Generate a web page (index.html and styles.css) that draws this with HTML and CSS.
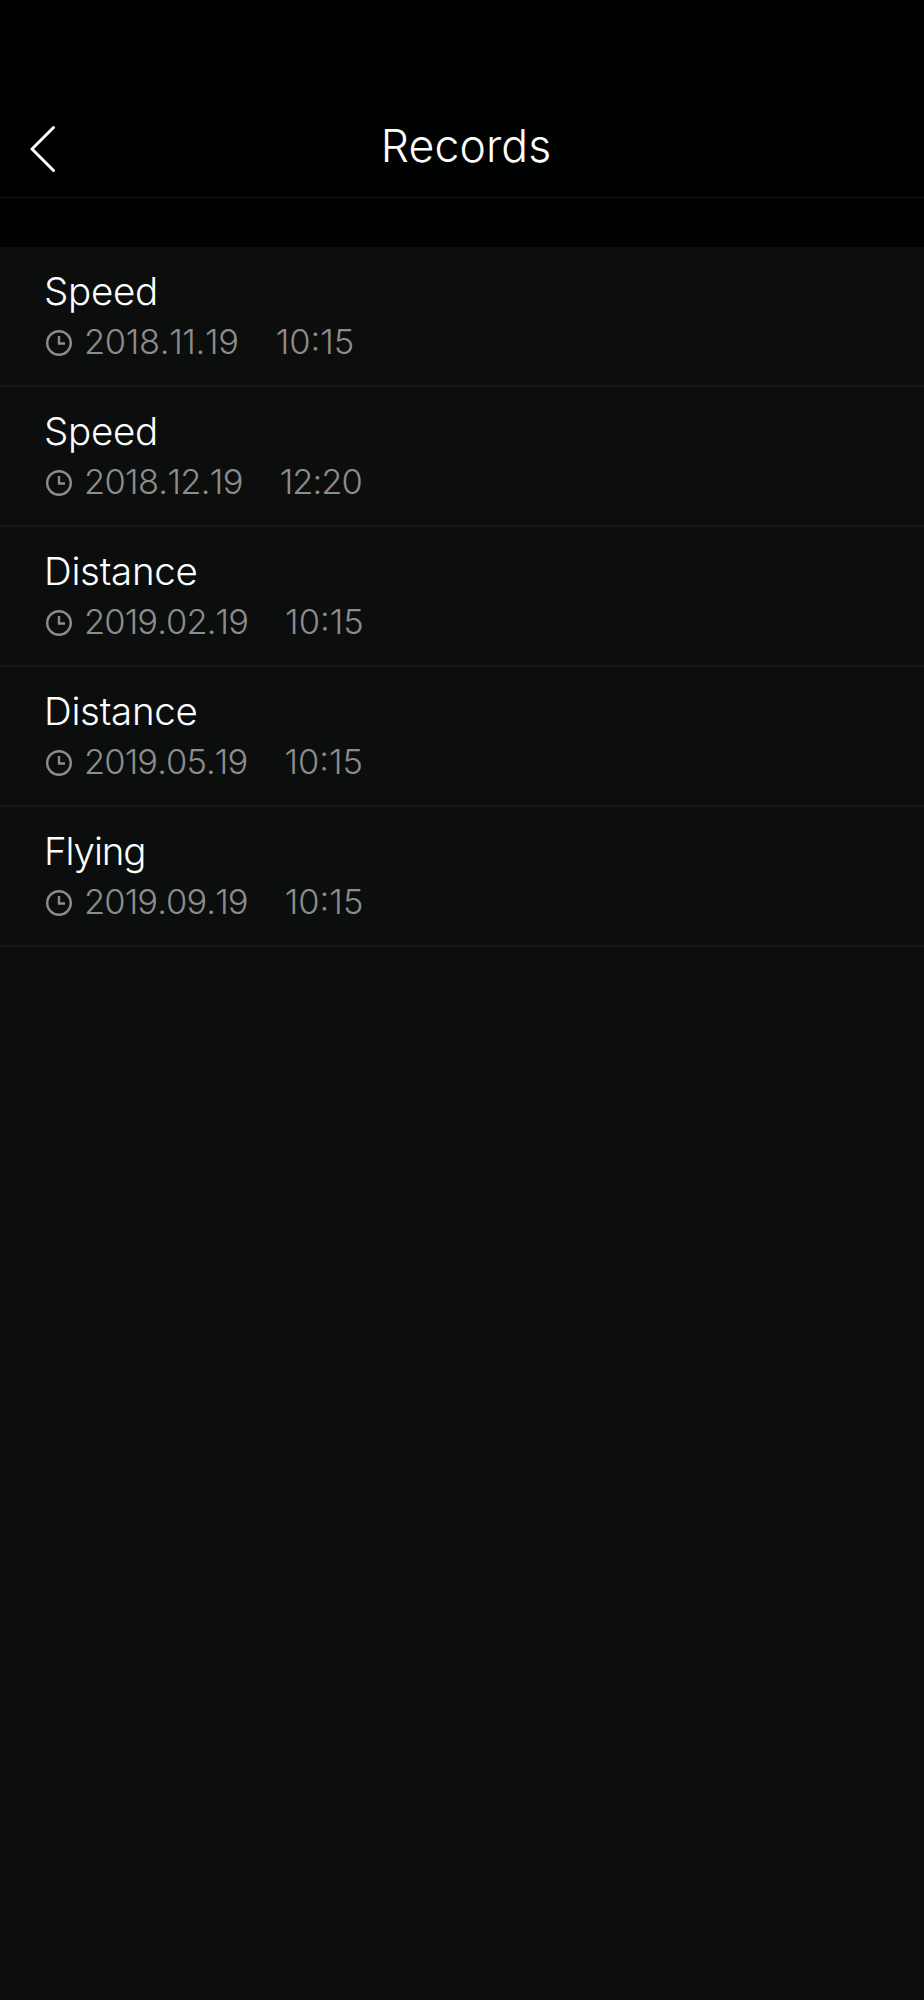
FILE: index.html
```html
<!DOCTYPE html>
<html lang="en">

<head>
    <meta charset="UTF-8">
    <meta name="viewport" content="width=device-width, initial-scale=1.0">
    <title>Records</title>
    <link rel="stylesheet" href="styles.css">
</head>

<body>
    <svg class="sprite" width="0" height="0">
        <symbol id="clock" viewBox="0 0 26 26">
            <circle cx="13" cy="13" r="11.8"/>
            <path d="M13 6v7.5h6"/>
        </symbol>
    </svg>

    <header class="header">
        <a class="back" href="#" aria-label="Back">
            <svg width="26" height="48" viewBox="0 0 26 48">
                <path d="M23.5 2.5L2 24L23.5 45.5"/>
            </svg>
        </a>
        <h1 class="title">Records</h1>
    </header>

    <ul class="records">
        <li class="record">
            <div class="name">Speed</div>
            <div class="info">
                <svg class="icon"><use href="#clock"/></svg>
                <span class="date loose">2018.11.19</span>
                <span class="time">10:15</span>
            </div>
        </li>
        <li class="record">
            <div class="name">Speed</div>
            <div class="info">
                <svg class="icon"><use href="#clock"/></svg>
                <span class="date medium">2018.12.19</span>
                <span class="time narrow">12:20</span>
            </div>
        </li>
        <li class="record">
            <div class="name">Distance</div>
            <div class="info">
                <svg class="icon"><use href="#clock"/></svg>
                <span class="date">2019.02.19</span>
                <span class="time">10:15</span>
            </div>
        </li>
        <li class="record">
            <div class="name">Distance</div>
            <div class="info">
                <svg class="icon"><use href="#clock"/></svg>
                <span class="date">2019.05.19</span>
                <span class="time">10:15</span>
            </div>
        </li>
        <li class="record">
            <div class="name tight">Flying</div>
            <div class="info">
                <svg class="icon"><use href="#clock"/></svg>
                <span class="date">2019.09.19</span>
                <span class="time">10:15</span>
            </div>
        </li>
    </ul>
</body>

</html>
```
FILE: styles.css
```css
* {
    margin: 0;
    padding: 0;
    box-sizing: border-box;
}

body {
    display: flex;
    flex-direction: column;
    min-height: 100vh;
    background: #000101;
    color: #fff;
    font-family: Inter, "Liberation Sans", sans-serif;
    font-weight: 300;
}

.sprite {
    display: block;
    height: 0;
}

.header {
    display: grid;
    grid-template-columns: 60px 1fr 52px;
    align-items: center;
    height: 198px;
    padding-top: 100px;
    border-bottom: 1px solid #141515;
}

.back {
    display: flex;
    padding-left: 30px;
}

.back path {
    fill: none;
    stroke: #fff;
    stroke-width: 3;
    stroke-linecap: round;
    stroke-linejoin: round;
}

.title {
    padding-bottom: 5px;
    font-size: 44.5px;
    font-weight: 300;
    line-height: 54px;
    text-align: center;
    letter-spacing: 0.1px;
}

.records {
    flex: 1;
    margin-top: 49px;
    background: #0c0e0d;
    list-style: none;
}

.record {
    height: 140px;
    padding: 21px 44px 0;
    border-bottom: 2px solid #161817;
}

.name {
    font-size: 38.5px;
    line-height: 46px;
    letter-spacing: -0.3px;
}

.tight {
    letter-spacing: -1.1px;
}

.info {
    display: flex;
    align-items: center;
    margin-top: 7px;
    color: #8c8c8c;
    font-size: 34.5px;
    line-height: 42px;
    font-kerning: none;
}

.icon {
    width: 26px;
    height: 26px;
    margin: 2px 12px 0 2px;
    fill: none;
    stroke: #8c8c8c;
    stroke-width: 2.4;
}

.date {
    letter-spacing: -0.9px;
}

.medium {
    letter-spacing: -0.7px;
}

.loose {
    letter-spacing: -0.35px;
}

.time {
    margin-left: 37px;
}

.narrow {
    letter-spacing: -1px;
}
```
